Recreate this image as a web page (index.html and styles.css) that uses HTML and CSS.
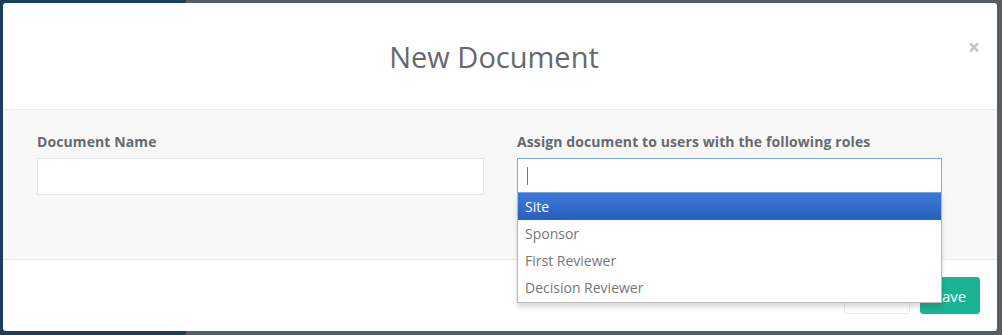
FILE: index.html
```html
<!DOCTYPE html>
<html lang="en">
<head>
    <meta charset="UTF-8">
    <title>New Document</title>
    <link rel="stylesheet" href="styles.css">
</head>
<body>
    <div class="modal">
        <!-- Header -->
        <div class="modal-header">
            <h2 class="modal-title">New Document</h2>
            <span class="close">&times;</span>
        </div>

        <!-- Body -->
        <div class="modal-body">
            <div class="form-group">
                <label>Document Name</label>
                <div class="form-control"></div>
            </div>
            <div class="form-group roles">
                <label>Assign document to users with the following roles</label>
                <div class="form-control focused"><span class="caret"></span></div>
                <ul class="chosen-results">
                    <li class="highlighted">Site</li>
                    <li>Sponsor</li>
                    <li>First Reviewer</li>
                    <li>Decision Reviewer</li>
                </ul>
            </div>
        </div>

        <!-- Footer -->
        <div class="modal-footer">
            <button class="btn btn-white">Cancel</button>
            <button class="btn btn-primary">Save</button>
        </div>
    </div>
</body>
</html>
```

FILE: styles.css
```css
/* Backdrop */
body {
    margin: 0;
    padding: 3px 5px 4px 3px;
    font-family: 'Open Sans', 'Liberation Sans', sans-serif;
    color: #676a6c;
    background: linear-gradient(to right, #1c3d5c 186px, #575c65 186px);
    height: 335px;
    box-sizing: border-box;
    overflow: hidden;
}

.modal {
    width: 994px;
    height: 328px;
    background-color: white;
    border-radius: 3px;
    display: flex;
    flex-direction: column;
}

/* Header */
.modal-header {
    height: 106px;
    border-bottom: 1px solid #ebebeb;
    display: flex;
    align-items: center;
    justify-content: center;
    padding-right: 12px;
    position: relative;
}

.modal-title {
    margin: 0;
    font-size: 29px;
    font-weight: 500;
    color: #66696b;
}

.close {
    position: absolute;
    right: 17px;
    top: 30px;
    font-size: 21px;
    font-weight: 700;
    color: #c2c2c2;
}

/* Body */
.modal-body {
    height: 150px;
    background-color: #f8f8f9;
    border-bottom: 1px solid #ebebeb;
    padding: 22px 34px 0;
    box-sizing: border-box;
    display: grid;
    grid-template-columns: 447px 425px;
    column-gap: 33px;
}

.form-group {
    position: relative;
}

label {
    display: block;
    font-size: 14px;
    font-weight: 700;
    margin-bottom: 6px;
    line-height: 20px;
    letter-spacing: 0.1px;
}

.form-control {
    height: 37px;
    background-color: white;
    border: 1px solid #e5e6e7;
    box-sizing: border-box;
    display: flex;
    align-items: center;
}

.form-control.focused {
    height: 35px;
    border-color: #78a8e8;
    padding-left: 9px;
}

.caret {
    width: 1px;
    height: 18px;
    background-color: #777;
}

/* Dropdown */
.chosen-results {
    position: absolute;
    left: 0;
    right: 0;
    top: 61px;
    margin: 0;
    padding: 0 0 1px;
    list-style: none;
    background-color: white;
    border: 1px solid #b9b9b9;
    border-top: none;
    box-shadow: 0 4px 5px rgba(0, 0, 0, 0.15);
    z-index: 2;
}

.chosen-results li {
    height: 27px;
    line-height: 27px;
    padding-left: 7px;
    font-size: 14px;
    color: #777;
}

.chosen-results li.highlighted {
    background: linear-gradient(#3875d7 20%, #2a62bc 90%);
    color: white;
}

/* Footer */
.modal-footer {
    flex: 1;
    display: flex;
    justify-content: flex-end;
    align-items: flex-start;
    gap: 10px;
    padding: 17px 17px 0;
}

.btn {
    height: 37px;
    padding: 0 12px;
    font-family: inherit;
    font-size: 15px;
    border-radius: 3px;
}

.btn-white {
    background-color: white;
    border: 1px solid #e7eaec;
    color: #676a6c;
    width: 66px;
}

.btn-primary {
    background-color: #1ab394;
    border: 1px solid #1ab394;
    color: white;
    width: 60px;
}
```
